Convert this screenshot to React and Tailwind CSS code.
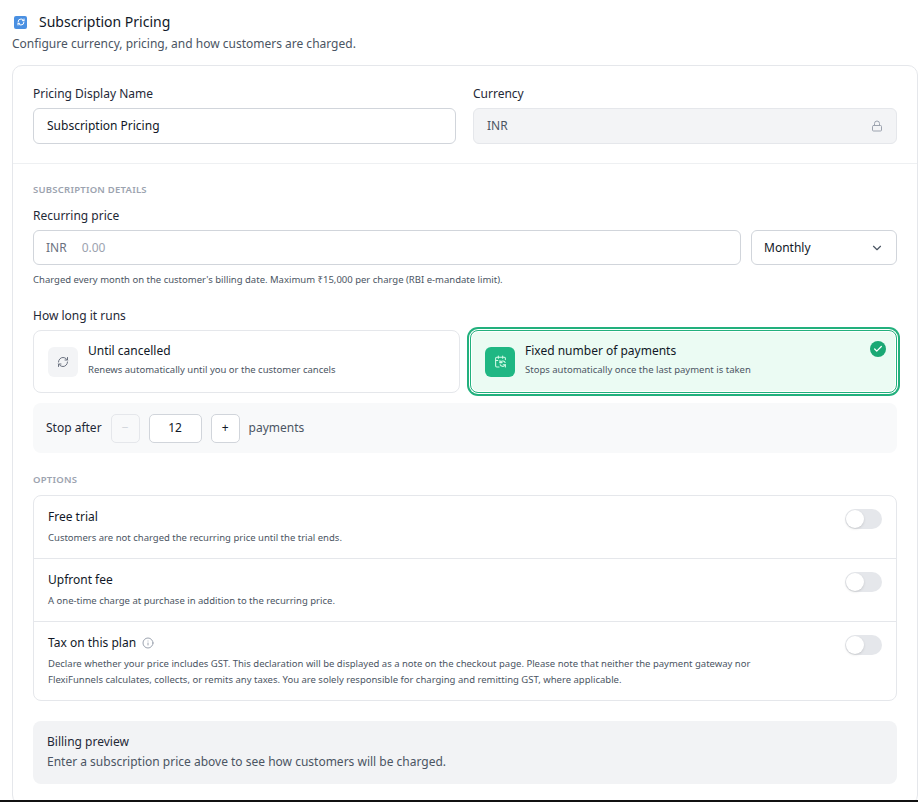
import React from "react";
import { RefreshCw, Lock, ChevronDown, Check, Info, CalendarSync } from "lucide-react";

function Toggle() {
  return (
    <div className="w-[37px] h-[20px] rounded-full bg-[#e5e7eb] relative shrink-0">
      <div className="absolute left-[1px] top-[1px] w-[18px] h-[18px] rounded-full bg-white shadow" />
    </div>
  );
}

function Option({ title, desc, last }) {
  return (
    <div className={`flex justify-between px-[14px] pt-[12px] pb-[12px] ${last ? "" : "border-b border-[#e5e7eb]"}`}>
      <div>
        <div className="text-[12px] text-[#111827] leading-[18px] flex items-center gap-[6px]">{title}</div>
        <div className="text-[9.5px] text-[#4b5563] mt-[4px] leading-[16px] pr-[40px]">{desc}</div>
      </div>
      <div className="pt-[1px]"><Toggle /></div>
    </div>
  );
}

export default function App() {
  return (
    <div className="w-[918px] h-[802px] overflow-hidden bg-white relative leading-[16px]" style={{ fontFamily: '"Noto Sans", sans-serif' }}>
      <div className="pl-[14px] pt-[13px] flex items-center gap-[12px]">
        <div className="w-[13px] h-[13px] rounded-[2px] bg-[#4a90e2] flex items-center justify-center">
          <RefreshCw size={8} color="white" strokeWidth={3} />
        </div>
        <span className="text-[14px] leading-[18px] text-[#111827]">Subscription Pricing</span>
      </div>
      <div className="pl-[12px] mt-[5px] text-[12px] text-[#4b5563]">Configure currency, pricing, and how customers are charged.</div>
      <div className="ml-[12px] mt-[13px] w-[906px] border border-[#e5e7eb] rounded-[10px]">
        <div className="px-[20px] pt-[20px] pb-[19px] flex gap-[17px] border-b border-[#eef0f2]">
          <div className="flex-1">
            <div className="text-[12px] text-[#1f2937] mb-[6px]">Pricing Display Name</div>
            <div className="h-[36px] border border-[#d1d5db] rounded-[6px] px-[13px] flex items-center text-[12px] text-[#111827]">Subscription Pricing</div>
          </div>
          <div className="w-[424px]">
            <div className="text-[12px] text-[#1f2937] mb-[6px]">Currency</div>
            <div className="h-[36px] border border-[#e5e7eb] bg-[#f3f4f6] rounded-[6px] px-[13px] flex items-center justify-between text-[12px] text-[#4b5563]">
              INR <Lock size={12} color="#9ca3af" />
            </div>
          </div>
        </div>
        <div className="px-[20px] pt-[20px]">
          <div className="text-[9.5px] leading-[12px] font-semibold tracking-wide text-[#9ca3af]">SUBSCRIPTION DETAILS</div>
          <div className="text-[12px] text-[#1f2937] mt-[12px]">Recurring price</div>
          <div className="flex gap-[10px] mt-[6px]">
            <div className="flex-1 h-[35px] border border-[#d1d5db] rounded-[6px] px-[12px] flex items-center gap-[15px] text-[12px]">
              <span className="text-[#6b7280]">INR</span><span className="text-[#9ca3af]">0.00</span>
            </div>
            <div className="w-[146px] h-[35px] border border-[#d1d5db] rounded-[6px] px-[12px] flex items-center justify-between text-[12px] text-[#111827]">
              Monthly <ChevronDown size={14} color="#4b5563" />
            </div>
          </div>
          <div className="text-[9.5px] leading-[12px] text-[#4b5563] mt-[9px]">Charged every month on the customer's billing date. Maximum ₹15,000 per charge (RBI e-mandate limit).</div>
          <div className="text-[12px] text-[#1f2937] mt-[22px]">How long it runs</div>
          <div className="flex gap-[10px] mt-[6px]">
            <div className="flex-1 h-[63px] border border-[#e5e7eb] rounded-[8px] px-[14px] flex items-center gap-[10px]">
              <div className="w-[30px] h-[30px] rounded-[6px] bg-[#f3f4f6] flex items-center justify-center"><RefreshCw size={12} color="#6b7280" /></div>
              <div className="-mt-[2px]">
                <div className="text-[12px] text-[#111827]">Until cancelled</div>
                <div className="text-[9.5px] text-[#4b5563] mt-[3px]">Renews automatically until you or the customer cancels</div>
              </div>
            </div>
            <div className="flex-1 h-[63px] rounded-[8px] border border-[#22b07d] bg-[#ebfbf3] px-[14px] flex items-center gap-[10px] relative" style={{ boxShadow: "inset 0 0 0 1px #fff, 0 0 0 1px #fff, 0 0 0 3px #22b07d" }}>
              <div className="w-[30px] h-[30px] rounded-[6px] bg-[#1fb783] flex items-center justify-center"><CalendarSync size={13} color="#d1fae5" /></div>
              <div className="-mt-[2px]">
                <div className="text-[12px] text-[#111827]">Fixed number of payments</div>
                <div className="text-[9.5px] text-[#4b5563] mt-[3px]">Stops automatically once the last payment is taken</div>
              </div>
              <div className="absolute right-[10px] top-[10px] w-[16px] h-[16px] rounded-full bg-[#1aa874] flex items-center justify-center"><Check size={10} color="white" strokeWidth={3} /></div>
            </div>
          </div>
          <div className="mt-[10px] h-[50px] bg-[#f8f9fa] rounded-[8px] px-[13px] flex items-center gap-[9px] text-[12px]">
            <span className="text-[#1f2937]">Stop after</span>
            <div className="w-[29px] h-[29px] border border-[#e5e7eb] rounded-[5px] flex items-center justify-center text-[#d1d5db]">−</div>
            <div className="w-[53px] h-[29px] border border-[#d1d5db] rounded-[5px] bg-white flex items-center justify-center text-[#111827]">12</div>
            <div className="w-[29px] h-[29px] border border-[#d1d5db] rounded-[5px] bg-white flex items-center justify-center text-[#111827]">+</div>
            <span className="text-[#4b5563]">payments</span>
          </div>
          <div className="text-[9.5px] leading-[12px] font-semibold tracking-wide text-[#9ca3af] mt-[21px]">OPTIONS</div>
          <div className="mt-[9px] border border-[#e5e7eb] rounded-[8px]">
            <Option title="Free trial" desc="Customers are not charged the recurring price until the trial ends." />
            <Option title="Upfront fee" desc="A one-time charge at purchase in addition to the recurring price." />
            <Option title={<>Tax on this plan <Info size={12} color="#9ca3af" /></>} last desc="Declare whether your price includes GST. This declaration will be displayed as a note on the checkout page. Please note that neither the payment gateway nor FlexiFunnels calculates, collects, or remits any taxes. You are solely responsible for charging and remitting GST, where applicable." />
          </div>
          <div className="mt-[20px] h-[63px] bg-[#f2f3f5] rounded-[8px] px-[14px] pt-[13px]">
            <div className="text-[12px] text-[#1f2937]">Billing preview</div>
            <div className="text-[12px] text-[#4b5563] mt-[4px]">Enter a subscription price above to see how customers will be charged.</div>
          </div>
          <div className="h-[20px]" />
        </div>
      </div>
      <div className="absolute left-0 right-0 top-[800px] h-[2px] bg-[#111]" />
    </div>
  );
}
